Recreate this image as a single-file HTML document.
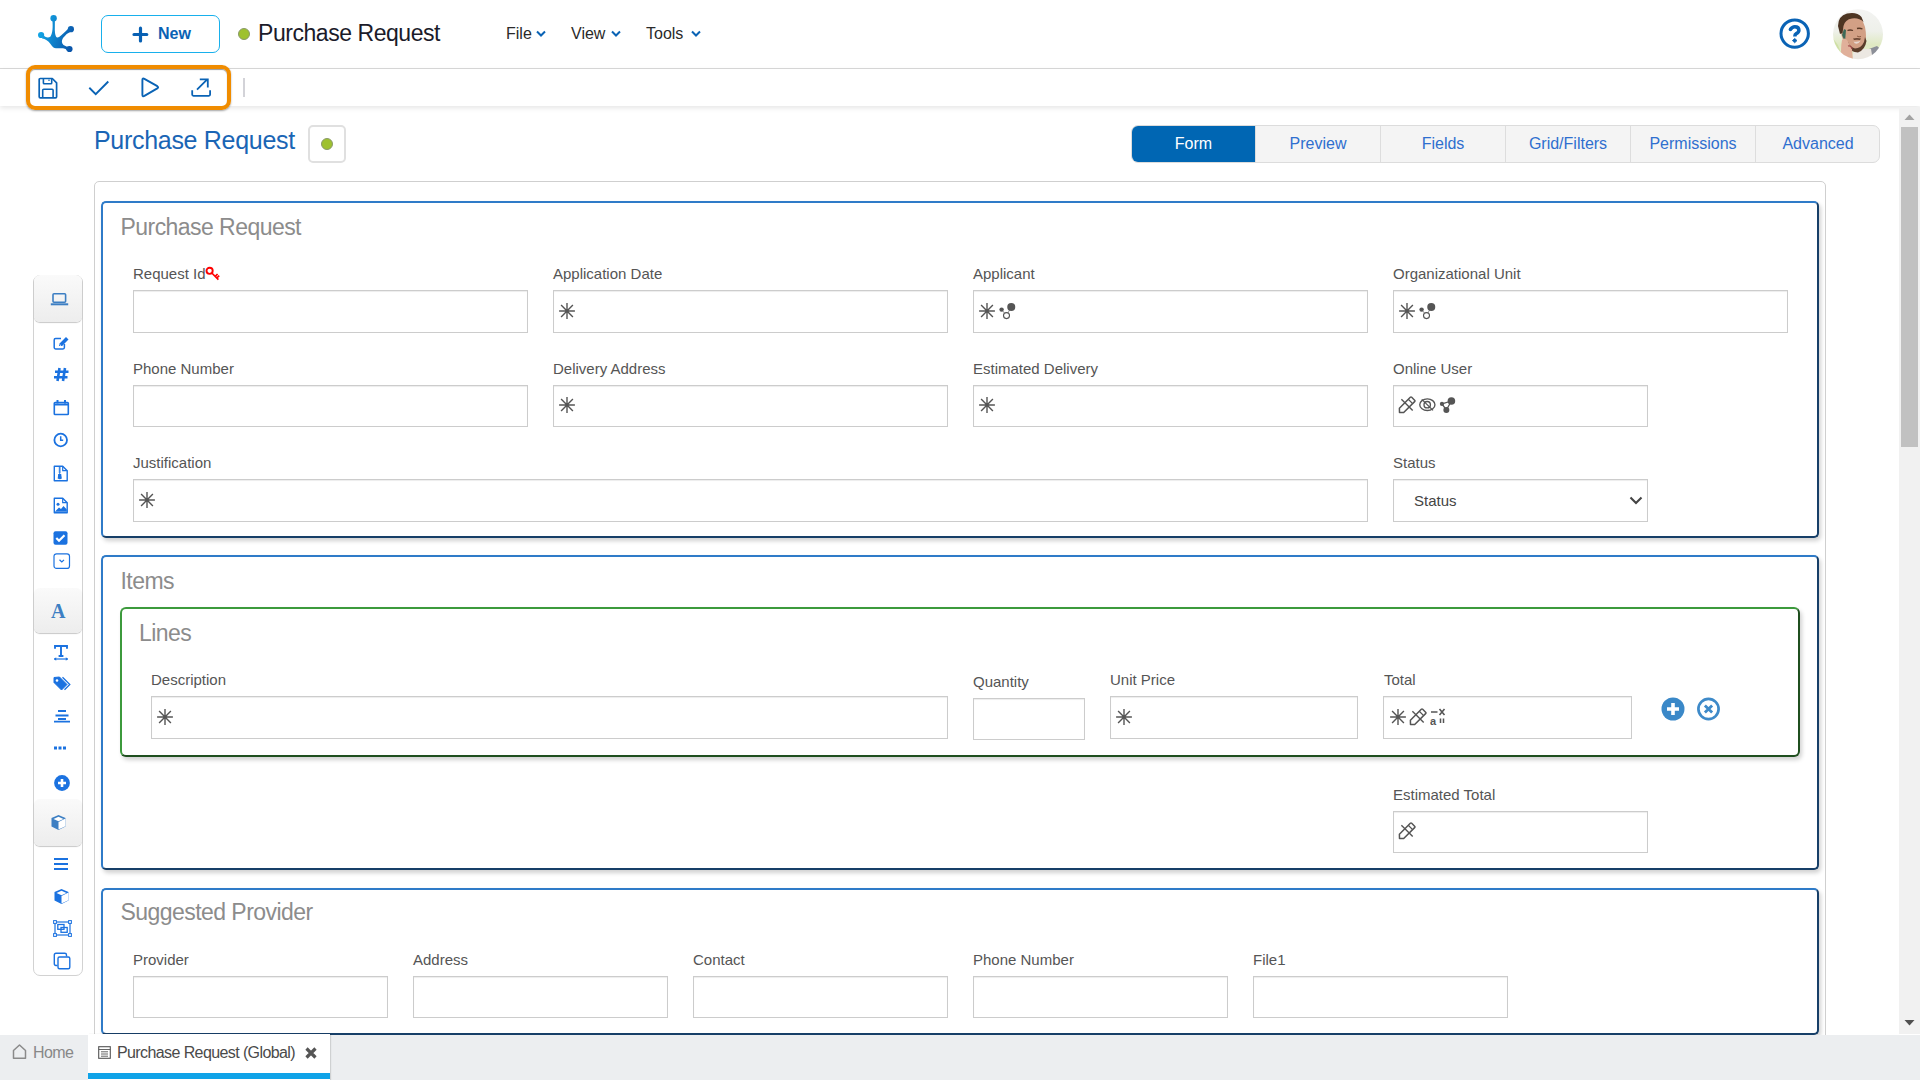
<!DOCTYPE html>
<html><head><meta charset="utf-8">
<style>
*{box-sizing:border-box;margin:0;padding:0}
html,body{width:1920px;height:1080px;overflow:hidden;background:#fff;font-family:"Liberation Sans",sans-serif;color:#333}
.a{position:absolute}
#hdr{left:0;top:0;width:1920px;height:69px;border-bottom:1px solid #d9d9d9;background:#fff}
#tb{left:0;top:69px;width:1920px;height:37px;background:#fff;box-shadow:0 2px 5px rgba(0,0,0,.1)}
.lbl{position:absolute;font-size:15px;color:#555;line-height:17px;white-space:nowrap}
.inp{position:absolute;height:43px;border:1px solid #ccc;background:#fff;box-shadow:inset 0 1px 1px rgba(0,0,0,.075)}
.panel{position:absolute;border:2px solid #2f7bc8;border-right-color:#173f68;border-bottom-color:#173f68;border-radius:5px;box-shadow:2px 3px 4px rgba(0,0,0,.18);background:#fff}
.ptitle{position:absolute;font-size:23px;color:#8c8c8c;white-space:nowrap;line-height:26px;letter-spacing:-0.55px}
.tab{position:absolute;top:0;height:36px;line-height:36px;text-align:center;font-size:16px;color:#2f6fcf;border-right:1px solid #ddd}
.ico{position:absolute}
.gpanel{position:absolute;border:2px solid #3c9a3c;border-right-color:#1f4f1f;border-bottom-color:#1f4f1f;border-radius:6px;box-shadow:2px 3px 4px rgba(0,0,0,.18);background:#fff}
</style></head><body>
<!-- header -->
<div id="hdr" class="a"></div>
<!-- logo -->
<svg class="a" style="left:30px;top:8px" width="60" height="52" viewBox="0 0 60 52">
<defs><linearGradient id="lg" gradientUnits="userSpaceOnUse" x1="9" y1="24" x2="43" y2="34"><stop offset="0" stop-color="#12a6e6"/><stop offset="1" stop-color="#0a55aa"/></linearGradient></defs>
<g fill="url(#lg)">
<circle cx="23.6" cy="10.2" r="3.2"/>
<circle cx="11.1" cy="27" r="3.1"/>
<circle cx="40.9" cy="21.2" r="3.1"/>
<circle cx="39.5" cy="41" r="3.1"/>
<path d="M22.3 12 C23 18 22.8 25 20.5 28.5 Q17.5 31 13.5 27.5 L12 30.5 Q17 31 20.5 36 Q23 40.2 26 40.2 L33 40.2 Q36 40.5 37.5 43 L41 39 Q37 39.5 33.5 37 Q30.5 34 33 30 Q36 25.5 41 23.5 L39.5 19.5 Q35 24 31 27.5 Q28.5 30 27 29.5 Q25 28.5 24.8 22 L24.9 12 Z"/>
</g></svg>
<!-- New button -->
<div class="a" style="left:101px;top:15px;width:119px;height:38px;border:1px solid #18b0ec;border-radius:7px"></div>
<svg class="a" style="left:131px;top:25px" width="19" height="19" viewBox="0 0 19 19"><path d="M9.5 3.2V16M3 9.5H15.8" stroke="#0860b3" stroke-width="3.2" stroke-linecap="round"/></svg>
<div class="a" style="left:158px;top:23px;font-size:16px;font-weight:bold;color:#0a62b4;line-height:22px">New</div>
<!-- dot + title -->
<div class="a" style="left:238px;top:28px;width:12px;height:12px;border-radius:50%;background:#9ec12f;border:1px solid #8a9a6a"></div>
<div class="a" style="left:258px;top:19px;font-size:23px;color:#1b1b2a;line-height:28px;letter-spacing:-0.45px">Purchase Request</div>
<!-- menus -->
<div class="a" style="left:506px;top:25px;font-size:16px;color:#2a2a2a;line-height:18px">File</div>
<div class="a" style="left:571px;top:25px;font-size:16px;color:#2a2a2a;line-height:18px">View</div>
<div class="a" style="left:646px;top:25px;font-size:16px;color:#2a2a2a;line-height:18px">Tools</div>
<svg class="a" style="left:535px;top:29px" width="12" height="10" viewBox="0 0 12 10"><path d="M2 2.5L6 6.5L10 2.5" fill="none" stroke="#0a63b5" stroke-width="2"/></svg>
<svg class="a" style="left:610px;top:29px" width="12" height="10" viewBox="0 0 12 10"><path d="M2 2.5L6 6.5L10 2.5" fill="none" stroke="#0a63b5" stroke-width="2"/></svg>
<svg class="a" style="left:690px;top:29px" width="12" height="10" viewBox="0 0 12 10"><path d="M2 2.5L6 6.5L10 2.5" fill="none" stroke="#0a63b5" stroke-width="2"/></svg>
<!-- help -->
<svg class="a" style="left:1777px;top:16px" width="36" height="36" viewBox="0 0 36 36"><circle cx="17.7" cy="17.6" r="13.7" fill="none" stroke="#0a63b5" stroke-width="3"/><path d="M13.3 13.5Q15.2 10.7 17.8 10.7Q21.9 10.7 21.9 14.3Q21.9 16.4 19.3 17.6Q17.8 18.4 17.8 20.6" fill="none" stroke="#0a63b5" stroke-width="3.5" stroke-linecap="butt"/><circle cx="13.4" cy="13.4" r="1.75" fill="#0a63b5"/><path d="M17.7 22.4L20 24.6L17.7 26.8L15.4 24.6Z" fill="#0a63b5" stroke="#0a63b5" stroke-width="0.8" stroke-linejoin="round"/></svg>
<!-- avatar -->
<svg class="a" style="left:1833px;top:9px" width="50" height="51" viewBox="0 0 50 51">
<defs><clipPath id="av"><circle cx="25" cy="25.2" r="25"/></clipPath>
<linearGradient id="avbg" x1="0" y1="0" x2="0" y2="1"><stop offset="0" stop-color="#f4f4f3"/><stop offset="0.45" stop-color="#eef0ea"/><stop offset="0.7" stop-color="#dfe9c2"/><stop offset="1" stop-color="#e9efd6"/></linearGradient>
<filter id="avb" x="-10%" y="-10%" width="120%" height="120%"><feGaussianBlur stdDeviation="0.5"/></filter></defs>
<g clip-path="url(#av)"><g filter="url(#avb)">
<rect x="-2" y="-2" width="54" height="54" fill="url(#avbg)"/>
<path d="M0 30 Q5 34 8 44 L0 50Z" fill="#cfe0a6"/>
<path d="M36 40 L44 37 L52 44 L52 52 L38 52Z" fill="#8c8f98"/>
<path d="M19 52 L21 41 L30 40 L38 40 L40 52Z" fill="#ece8e2"/>
<path d="M8 12 Q8 6 16 5 Q26 4 29 10 L32 18 Q34 28 32 34 Q30 41 24 42.5 Q18 43 14 37 Q9 31 8 24Z" fill="#d2a085"/>
<path d="M5 17 Q5 7 14 4.5 Q24 2.5 28.5 8 L30.5 13 Q26 8.5 19 9.5 Q12 10.5 10.5 17 L9.5 24 L7 25Z" fill="#4e3424"/>
<path d="M14.5 21.5 Q17 20.5 20 21.5 M24 19.5 Q27 18.8 29.5 20" stroke="#5a3a28" stroke-width="1.3" fill="none"/>
<path d="M15 33 Q17 38 22 39.5 Q28 39.5 31 33 L32 28 L33.5 32 Q32 41 25 43.5 Q18 43.5 14.5 37Z" fill="#5a3c2c"/><path d="M20 29.5 Q24 28.5 28 29.5 L27 31 Q24 30.3 21 31Z" fill="#6a4632"/>
<path d="M20.5 32.5 Q24 33.3 27.5 31.8 Q26 34.5 23.5 34.7 Q21.5 34.7 20.5 32.5Z" fill="#e8d8d0"/>
<path d="M24 27 Q26 28.5 28 27.5" stroke="#8a5a40" stroke-width="1" fill="none"/>
<path d="M9 26 L11 20 L13 21 L12 33Z" fill="#3d6a58"/>
<path d="M9 31 Q11 28 14 31 L19 40 L20 52 L9 52 Q7 42 9 31Z" fill="#e0b09a"/>
<path d="M15 37 Q18 36 19 40" stroke="#a04848" stroke-width="1.2" fill="none"/>
</g></g></svg>

<div id="tb" class="a"></div>
<div class="a" style="left:243px;top:78px;width:2px;height:19px;background:#d3d3d8"></div>
<svg class="a" style="left:36px;top:76px" width="24" height="24" viewBox="0 0 24 24"><path d="M3.2 3.6Q3.2 2.5 4.3 2.5H16.3L20.6 6.8V20.7Q20.6 21.8 19.5 21.8H4.3Q3.2 21.8 3.2 20.7Z" fill="none" stroke="#0a63b5" stroke-width="1.7" stroke-linejoin="round"/><path d="M7.4 3V7Q7.4 7.8 8.2 7.8H14.9Q15.7 7.8 15.7 7V3" fill="none" stroke="#0a63b5" stroke-width="1.6"/><path d="M6.7 21.5V14.2Q6.7 13.2 7.7 13.2H16.1Q17.1 13.2 17.1 14.2V21.5" fill="none" stroke="#0a63b5" stroke-width="1.6"/><path d="M13 3.5V5" stroke="#0a63b5" stroke-width="1.2"/></svg>
<svg class="a" style="left:86px;top:77px" width="24" height="24" viewBox="0 0 24 24"><path d="M3.3 10.8L9.7 17.1L22.3 4.5" fill="none" stroke="#0a63b5" stroke-width="1.9"/></svg>
<svg class="a" style="left:138px;top:76px" width="24" height="24" viewBox="0 0 24 24"><path d="M4.4 4Q4.4 1.8 6.4 2.9L19.3 10.2Q21 11.3 19.3 12.4L6.4 19.9Q4.4 21 4.4 18.8Z" fill="none" stroke="#0a63b5" stroke-width="1.9" stroke-linejoin="round"/></svg>
<svg class="a" style="left:189px;top:75px" width="24" height="24" viewBox="0 0 24 24"><path d="M3.2 15.2V19.6Q3.2 20.8 4.4 20.8H19.9Q21.1 20.8 21.1 19.6V15.2" fill="none" stroke="#0a63b5" stroke-width="1.8"/><path d="M8 14.6L18 4.6M10.8 4.4H18.8V12.4" fill="none" stroke="#0a63b5" stroke-width="1.8"/></svg>
<div class="a" style="left:26px;top:65px;width:205px;height:45px;border:4px solid #f08c00;border-radius:9px;box-shadow:0 1px 2px rgba(0,0,0,.35),inset 0 1px 1px rgba(0,0,0,.4)"></div>


<!-- page title -->
<div class="a" style="left:94px;top:125px;font-size:25px;color:#1a65b5;line-height:30px;letter-spacing:-0.3px">Purchase Request</div>


<!-- status box -->
<div class="a" style="left:308px;top:125px;width:38px;height:38px;border:2px solid #e0e0e0;border-radius:5px;background:#fff"></div>
<div class="a" style="left:321px;top:138px;width:12px;height:12px;border-radius:50%;background:#9ec12f;border:1px solid #8a9a6a"></div>
<!-- tabs -->
<div class="a" style="left:1131px;top:125px;width:749px;height:38px;border:1px solid #dcdcdc;border-radius:7px;background:#f4f4f4;overflow:hidden">
 <div class="tab" style="left:0;width:123px;background:#0066b3;color:#fff;border-right:none">Form</div>
 <div class="tab" style="left:123px;width:126px;border-left:1px solid #ddd">Preview</div>
 <div class="tab" style="left:249px;width:125px">Fields</div>
 <div class="tab" style="left:374px;width:125px">Grid/Filters</div>
 <div class="tab" style="left:499px;width:125px">Permissions</div>
 <div class="tab" style="left:624px;width:124px;border-right:none">Advanced</div>
</div>
<!-- scrollbar -->
<div class="a" style="left:1899px;top:107px;width:21px;height:927px;background:#f1f1f1"></div>
<div class="a" style="left:1901px;top:127px;width:17px;height:320px;background:#c1c1c1"></div>
<svg class="a" style="left:1903px;top:112px" width="13" height="9" viewBox="0 0 13 9"><path d="M1.5 8L6.5 2.5L11.5 8Z" fill="#a3a3a3"/></svg>
<svg class="a" style="left:1903px;top:1019px" width="13" height="9" viewBox="0 0 13 9"><path d="M1.5 1L6.5 6.5L11.5 1Z" fill="#505050"/></svg>
<!-- sidebar -->
<div class="a" style="left:33px;top:275px;width:50px;height:701px;border:1px solid #d2d2d2;border-radius:7px;background:#fff"></div>
<div class="a" style="left:34px;top:275px;width:48px;height:47px;border-radius:6px;background:linear-gradient(#fafafa,#ededed);box-shadow:0 1px 1px rgba(0,0,0,.22)"></div>
<div class="a" style="left:34px;top:588px;width:48px;height:45px;border-radius:6px;background:linear-gradient(#fafafa,#ededed);box-shadow:0 1px 1px rgba(0,0,0,.22)"></div>
<div class="a" style="left:34px;top:799px;width:48px;height:47px;border-radius:6px;background:linear-gradient(#fafafa,#ededed);box-shadow:0 1px 1px rgba(0,0,0,.22)"></div>
<svg class="ico" style="left:50px;top:292px" width="19" height="14" viewBox="0 0 19 14"><rect x="3" y="1.8" width="12.6" height="8.5" rx="1" fill="none" stroke="#3d7fc3" stroke-width="1.6"/><path d="M0.8 12.3H18.2" stroke="#3d7fc3" stroke-width="2"/></svg>
<svg class="ico" style="left:53px;top:336px" width="17" height="14" viewBox="0 0 17 14"><path d="M8 2.5H2.6Q1.2 2.5 1.2 3.9V11.5Q1.2 12.9 2.6 12.9H10Q11.4 12.9 11.4 11.5V8" fill="none" stroke="#1b72e0" stroke-width="1.5"/><path d="M6 10L6.6 7.4L13 1L15.5 3.5L9.1 9.9Z" fill="#1b72e0"/><path d="M6.9 8.7L8.2 9.9" stroke="#fff" stroke-width="0.9"/></svg>
<svg class="ico" style="left:53px;top:367px" width="17" height="15" viewBox="0 0 17 15"><path d="M6.5 1L4.5 14M12 1L10 14M2 4.8H15.5M1 10.3H14.5" stroke="#1b72e0" stroke-width="2.6"/></svg>
<svg class="ico" style="left:53px;top:399px" width="17" height="17" viewBox="0 0 17 17"><rect x="1.3" y="3.5" width="14" height="12" rx="0.8" fill="none" stroke="#1b72e0" stroke-width="1.6"/><path d="M1.3 4.5H15.3V6.5H1.3Z" fill="#1b72e0"/><path d="M4.5 1V4.5M12 1V4.5" stroke="#1b72e0" stroke-width="2"/></svg>
<svg class="ico" style="left:53px;top:432px" width="16" height="16" viewBox="0 0 16 16"><circle cx="7.7" cy="8" r="6.3" fill="none" stroke="#1b72e0" stroke-width="1.8"/><path d="M7.7 4.2V8.3H10.2" fill="none" stroke="#1b72e0" stroke-width="1.5"/></svg>
<svg class="ico" style="left:53px;top:465px" width="16" height="17" viewBox="0 0 16 17"><path d="M1.3 1.2H9.7L14.2 5.7V15.8H1.3Z" fill="none" stroke="#1b72e0" stroke-width="1.4" stroke-linejoin="round"/><path d="M9.7 1.2V5.7H14.2" fill="none" stroke="#1b72e0" stroke-width="1.2"/><path d="M6.7 2V9M5.6 3H7.8M5.6 5H7.8M5.6 7H7.8" stroke="#1b72e0" stroke-width="0.9"/><path d="M5.2 9H8.2L8.8 13.5Q7 14.8 4.7 13.5Z" fill="#1b72e0"/></svg>
<svg class="ico" style="left:53px;top:497px" width="16" height="17" viewBox="0 0 16 17"><path d="M1.3 1.2H9.7L14.2 5.7V15.8H1.3Z" fill="none" stroke="#1b72e0" stroke-width="1.4" stroke-linejoin="round"/><path d="M9.7 1.2V5.7H14.2" fill="none" stroke="#1b72e0" stroke-width="1.2"/><circle cx="5" cy="7.2" r="1.5" fill="#1b72e0"/><path d="M2 14.5L6 10.5L8 12L10.5 9L13.8 12.5V14.8H2Z" fill="#1b72e0"/></svg>
<svg class="ico" style="left:53px;top:531px" width="15" height="15" viewBox="0 0 15 15"><rect x="0.5" y="0.2" width="14" height="13.6" rx="2" fill="#1b72e0"/><path d="M3.3 7L6 9.7L11.5 4.3" fill="none" stroke="#fff" stroke-width="2.2"/></svg>
<svg class="ico" style="left:53px;top:553px" width="18" height="17" viewBox="0 0 18 17"><rect x="1" y="0.8" width="15.5" height="14.6" rx="2.5" fill="none" stroke="#1b72e0" stroke-width="1.2"/><path d="M6.5 6.8L8.8 9L11 6.8" fill="none" stroke="#1b72e0" stroke-width="1.2"/></svg>
<div class="a" style="left:51px;top:600px;font-family:'Liberation Serif',serif;font-weight:bold;font-size:20px;line-height:22px;color:#3d7fc3">A</div>
<svg class="ico" style="left:53px;top:644px" width="16" height="17" viewBox="0 0 16 17"><path d="M2 4.8V2H14V4.8M8 2V12.3M5.6 12H10.4" fill="none" stroke="#1b72e0" stroke-width="1.9"/><path d="M1 15H15" stroke="#1b72e0" stroke-width="1.2"/><path d="M1 15L3.2 13.2V16.8ZM15 15L12.8 13.2V16.8Z" fill="#1b72e0"/></svg>
<svg class="ico" style="left:53px;top:676px" width="18" height="16" viewBox="0 0 18 16"><path d="M1 1.5V6.5L8.5 14L14 8.5L6.5 1Z" fill="#1b72e0" stroke="#1b72e0" stroke-width="1" stroke-linejoin="round"/><circle cx="4" cy="4.5" r="1.3" fill="#fff"/><path d="M9.5 1.2L16.8 8.5L11.5 13.8" fill="none" stroke="#1b72e0" stroke-width="1.3"/></svg>
<svg class="ico" style="left:53px;top:709px" width="18" height="14" viewBox="0 0 18 14"><path d="M5 2H13M2.5 6.5H15.5M5 10H13M1 12.6H17" stroke="#1b72e0" stroke-width="1.9"/></svg>
<svg class="ico" style="left:53px;top:745px" width="14" height="6" viewBox="0 0 14 6"><rect x="1" y="1.5" width="3" height="3" fill="#1b72e0"/><rect x="5.5" y="1.5" width="3" height="3" fill="#1b72e0"/><rect x="10" y="1.5" width="3" height="3" fill="#1b72e0"/></svg>
<svg class="ico" style="left:53px;top:774px" width="18" height="18" viewBox="0 0 18 18"><circle cx="9" cy="9" r="7.9" fill="#1b72e0"/><path d="M9 5V13M5 9H13" stroke="#fff" stroke-width="2.6"/></svg>
<svg class="ico" style="left:50px;top:814px" width="17" height="17" viewBox="0 0 17 17"><path d="M8.5 1L15.5 4V12.5L8.5 16L1.5 12.5V4Z" fill="#3d7fc3"/><path d="M8.5 8L15.5 4.5V12.2L8.5 15.5Z" fill="#fff"/><path d="M3.5 5L8.5 2.8L13.5 5L8.5 7.2Z" fill="#fff"/></svg>
<svg class="ico" style="left:53px;top:857px" width="16" height="14" viewBox="0 0 16 14"><path d="M1 2H15M1 7H15M1 12H15" stroke="#1b72e0" stroke-width="2.1"/></svg>
<svg class="ico" style="left:53px;top:888px" width="17" height="17" viewBox="0 0 17 17"><path d="M8.5 1L15.5 4V12.5L8.5 16L1.5 12.5V4Z" fill="#1b72e0"/><path d="M8.5 8L15.5 4.5V12.2L8.5 15.5Z" fill="#fff"/><path d="M3.5 5L8.5 2.8L13.5 5L8.5 7.2Z" fill="#fff"/></svg>
<svg class="ico" style="left:53px;top:920px" width="19" height="17" viewBox="0 0 19 17"><rect x="2" y="2" width="15" height="13" fill="none" stroke="#1b72e0" stroke-width="1.2"/><rect x="0.6" y="0.6" width="2.8" height="2.8" fill="#fff" stroke="#1b72e0" stroke-width="1"/><rect x="15.6" y="0.6" width="2.8" height="2.8" fill="#fff" stroke="#1b72e0" stroke-width="1"/><rect x="0.6" y="13.6" width="2.8" height="2.8" fill="#fff" stroke="#1b72e0" stroke-width="1"/><rect x="15.6" y="13.6" width="2.8" height="2.8" fill="#fff" stroke="#1b72e0" stroke-width="1"/><rect x="4.8" y="4.5" width="6.2" height="4.8" fill="none" stroke="#1b72e0" stroke-width="1.3"/><rect x="8" y="7.5" width="6.2" height="4.8" fill="none" stroke="#1b72e0" stroke-width="1.3"/></svg>
<svg class="ico" style="left:53px;top:952px" width="18" height="18" viewBox="0 0 18 18"><path d="M4.5 13.5H3Q1.3 13.5 1.3 11.8V3Q1.3 1.3 3 1.3H11.8Q13.5 1.3 13.5 3V4.5" fill="none" stroke="#1b72e0" stroke-width="1.4"/><rect x="5" y="5" width="11.8" height="11.8" rx="1.5" fill="none" stroke="#1b72e0" stroke-width="1.4"/></svg>
<!-- outer container -->
<div class="a" style="left:94px;top:181px;width:1732px;height:900px;border:1px solid #cfcfcf;border-radius:5px"></div>

<!-- panel 1 -->
<div class="panel" style="left:101px;top:201px;width:1718px;height:337px"></div>
<div class="ptitle" style="left:120.5px;top:214px">Purchase Request</div>

<!-- panel 2 -->
<div class="panel" style="left:101px;top:555px;width:1718px;height:315px"></div>
<div class="ptitle" style="left:120.5px;top:568px">Items</div>

<!-- panel 3 -->
<div class="panel" style="left:101px;top:888px;width:1718px;height:147px"></div>
<div class="ptitle" style="left:120.5px;top:899px">Suggested Provider</div>

<!-- fields -->
<div class="lbl" style="left:133px;top:265.3px">Request Id<svg style="position:absolute;left:72px;top:0px" width="16" height="16" viewBox="0 0 16 16"><circle cx="4.6" cy="5.8" r="3.1" fill="none" stroke="#f00" stroke-width="1.9"/><path d="M6.8 8L13.4 14.6M10.2 11.4L12.6 9M11.8 13L14.2 10.6" stroke="#f00" stroke-width="1.7"/></svg></div>
<div class="inp" style="left:133px;top:290px;width:395px;height:43px"></div>
<div class="lbl" style="left:553px;top:265.3px">Application Date</div>
<div class="inp" style="left:553px;top:290px;width:395px;height:43px"></div><svg class="ico" style="left:559px;top:303px" width="16" height="16" viewBox="0 0 16 16"><path d="M8 0.1V15.9M0.1 8H15.9M2.1 2.1L13.9 13.9M13.9 2.1L2.1 13.9" stroke="#555" stroke-width="1.4"/></svg>
<div class="lbl" style="left:973px;top:265.3px">Applicant</div>
<div class="inp" style="left:973px;top:290px;width:395px;height:43px"></div><svg class="ico" style="left:979px;top:303px" width="16" height="16" viewBox="0 0 16 16"><path d="M8 0.1V15.9M0.1 8H15.9M2.1 2.1L13.9 13.9M13.9 2.1L2.1 13.9" stroke="#555" stroke-width="1.4"/></svg><svg class="ico" style="left:997px;top:300px" width="20" height="20" viewBox="0 0 20 20"><path d="M4.6 9.6L9.5 15.6L14.2 7" stroke="#777" stroke-width="0.8" fill="none"/><circle cx="4.6" cy="9.6" r="2.2" fill="#555"/><circle cx="14.25" cy="6.9" r="4" fill="#555"/><circle cx="9.5" cy="15.6" r="3" fill="#fff" stroke="#555" stroke-width="1.1"/></svg>
<div class="lbl" style="left:1393px;top:265.3px">Organizational Unit</div>
<div class="inp" style="left:1393px;top:290px;width:395px;height:43px"></div><svg class="ico" style="left:1399px;top:303px" width="16" height="16" viewBox="0 0 16 16"><path d="M8 0.1V15.9M0.1 8H15.9M2.1 2.1L13.9 13.9M13.9 2.1L2.1 13.9" stroke="#555" stroke-width="1.4"/></svg><svg class="ico" style="left:1417px;top:300px" width="20" height="20" viewBox="0 0 20 20"><path d="M4.6 9.6L9.5 15.6L14.2 7" stroke="#777" stroke-width="0.8" fill="none"/><circle cx="4.6" cy="9.6" r="2.2" fill="#555"/><circle cx="14.25" cy="6.9" r="4" fill="#555"/><circle cx="9.5" cy="15.6" r="3" fill="#fff" stroke="#555" stroke-width="1.1"/></svg>
<div class="lbl" style="left:133px;top:360.3px">Phone Number</div>
<div class="inp" style="left:133px;top:385px;width:395px;height:42px"></div>
<div class="lbl" style="left:553px;top:360.3px">Delivery Address</div>
<div class="inp" style="left:553px;top:385px;width:395px;height:42px"></div><svg class="ico" style="left:559px;top:397px" width="16" height="16" viewBox="0 0 16 16"><path d="M8 0.1V15.9M0.1 8H15.9M2.1 2.1L13.9 13.9M13.9 2.1L2.1 13.9" stroke="#555" stroke-width="1.4"/></svg>
<div class="lbl" style="left:973px;top:360.3px">Estimated Delivery</div>
<div class="inp" style="left:973px;top:385px;width:395px;height:42px"></div><svg class="ico" style="left:979px;top:397px" width="16" height="16" viewBox="0 0 16 16"><path d="M8 0.1V15.9M0.1 8H15.9M2.1 2.1L13.9 13.9M13.9 2.1L2.1 13.9" stroke="#555" stroke-width="1.4"/></svg>
<div class="lbl" style="left:1393px;top:360.3px">Online User</div>
<div class="inp" style="left:1393px;top:385px;width:255px;height:42px"></div><svg class="ico" style="left:1398px;top:396px" width="18" height="18" viewBox="0 0 18 18"><path d="M1.5 16.5L1.4 12.2L12.3 1.3Q13 0.6 13.7 1.3L16.6 4.2Q17.3 4.9 16.6 5.6L5.7 16.5Z" fill="none" stroke="#555" stroke-width="1.5" stroke-linejoin="round"/><path d="M10.3 3.3L14.6 7.6" stroke="#555" stroke-width="1.3"/><path d="M3.4 3.3L14.7 14.6" stroke="#555" stroke-width="1.4"/></svg><svg class="ico" style="left:1419px;top:398px" width="17" height="15" viewBox="0 0 17 15"><ellipse cx="8.35" cy="6.7" rx="7.6" ry="5.8" fill="none" stroke="#555" stroke-width="1.35"/><circle cx="8.2" cy="6.7" r="3.2" fill="none" stroke="#555" stroke-width="1.35"/><path d="M2.8 1.4L14 12.4" stroke="#555" stroke-width="1.3"/></svg><svg class="ico" style="left:1437px;top:394px" width="20" height="20" viewBox="0 0 20 20"><path d="M4.95 9.9L14.4 7L9.35 16Z" fill="#fff" stroke="#555" stroke-width="1.3" stroke-linejoin="round"/><circle cx="4.95" cy="9.9" r="2.1" fill="#555"/><circle cx="14.4" cy="7" r="3.8" fill="#555"/><circle cx="9.35" cy="16" r="3" fill="#555"/></svg>
<div class="lbl" style="left:133px;top:454.3px">Justification</div>
<div class="inp" style="left:133px;top:479px;width:1235px;height:43px"></div><svg class="ico" style="left:139px;top:492px" width="16" height="16" viewBox="0 0 16 16"><path d="M8 0.1V15.9M0.1 8H15.9M2.1 2.1L13.9 13.9M13.9 2.1L2.1 13.9" stroke="#555" stroke-width="1.4"/></svg>
<div class="lbl" style="left:1393px;top:454.3px">Status</div>
<div class="inp" style="left:1393px;top:479px;width:255px;height:43px"></div><div class="a" style="left:1414px;top:492px;font-size:15px;color:#444;line-height:17px">Status</div><svg class="ico" style="left:1629px;top:495px" width="14" height="11" viewBox="0 0 14 11"><path d="M1.5 2.5L7 8L12.5 2.5" fill="none" stroke="#444" stroke-width="2.1"/></svg>
<div class="gpanel" style="left:120px;top:607px;width:1680px;height:150px"></div>
<div class="ptitle" style="left:139px;top:620px">Lines</div>
<div class="lbl" style="left:151px;top:671.3px">Description</div>
<div class="inp" style="left:151px;top:696px;width:797px;height:43px"></div><svg class="ico" style="left:157px;top:709px" width="16" height="16" viewBox="0 0 16 16"><path d="M8 0.1V15.9M0.1 8H15.9M2.1 2.1L13.9 13.9M13.9 2.1L2.1 13.9" stroke="#555" stroke-width="1.4"/></svg>
<div class="lbl" style="left:973px;top:673.3px">Quantity</div>
<div class="inp" style="left:973px;top:698px;width:112px;height:42px"></div>
<div class="lbl" style="left:1110px;top:671.3px">Unit Price</div>
<div class="inp" style="left:1110px;top:696px;width:248px;height:43px"></div><svg class="ico" style="left:1116px;top:709px" width="16" height="16" viewBox="0 0 16 16"><path d="M8 0.1V15.9M0.1 8H15.9M2.1 2.1L13.9 13.9M13.9 2.1L2.1 13.9" stroke="#555" stroke-width="1.4"/></svg>
<div class="lbl" style="left:1384px;top:671.3px">Total</div>
<div class="inp" style="left:1383px;top:696px;width:249px;height:43px"></div><svg class="ico" style="left:1390px;top:709px" width="16" height="16" viewBox="0 0 16 16"><path d="M8 0.1V15.9M0.1 8H15.9M2.1 2.1L13.9 13.9M13.9 2.1L2.1 13.9" stroke="#555" stroke-width="1.4"/></svg><svg class="ico" style="left:1409px;top:708px" width="18" height="18" viewBox="0 0 18 18"><path d="M1.5 16.5L1.4 12.2L12.3 1.3Q13 0.6 13.7 1.3L16.6 4.2Q17.3 4.9 16.6 5.6L5.7 16.5Z" fill="none" stroke="#555" stroke-width="1.5" stroke-linejoin="round"/><path d="M10.3 3.3L14.6 7.6" stroke="#555" stroke-width="1.3"/><path d="M3.4 3.3L14.7 14.6" stroke="#555" stroke-width="1.4"/></svg><svg class="ico" style="left:1430px;top:708px" width="17" height="17" viewBox="0 0 17 17"><path d="M1 4H7.5" stroke="#555" stroke-width="1.5"/><path d="M9.5 1L14.5 7M14.5 1L9.5 7" stroke="#555" stroke-width="1.6"/><text x="0.1" y="16.6" font-family="Liberation Sans" font-weight="bold" font-size="11" fill="#555">a</text><path d="M10.5 10.5V15M13.5 10.5V15" stroke="#555" stroke-width="1.5"/></svg>
<svg class="ico" style="left:1660px;top:696px" width="26" height="26" viewBox="0 0 26 26"><circle cx="13" cy="13" r="11.5" fill="#3a88c8"/><path d="M13 7V19M7 13H19" stroke="#fff" stroke-width="3.6"/></svg>
<svg class="ico" style="left:1695px;top:696px" width="26" height="26" viewBox="0 0 26 26"><circle cx="13.5" cy="13" r="10.1" fill="none" stroke="#3e8ac9" stroke-width="2.7"/><path d="M9.9 9.4L17.1 16.6M17.1 9.4L9.9 16.6" stroke="#3e8ac9" stroke-width="2.8"/></svg>
<div class="lbl" style="left:1393px;top:786.3px">Estimated Total</div>
<div class="inp" style="left:1393px;top:811px;width:255px;height:42px"></div><svg class="ico" style="left:1398px;top:822px" width="18" height="18" viewBox="0 0 18 18"><path d="M1.5 16.5L1.4 12.2L12.3 1.3Q13 0.6 13.7 1.3L16.6 4.2Q17.3 4.9 16.6 5.6L5.7 16.5Z" fill="none" stroke="#555" stroke-width="1.5" stroke-linejoin="round"/><path d="M10.3 3.3L14.6 7.6" stroke="#555" stroke-width="1.3"/><path d="M3.4 3.3L14.7 14.6" stroke="#555" stroke-width="1.4"/></svg>
<div class="lbl" style="left:133px;top:950.7px">Provider</div>
<div class="inp" style="left:133px;top:976px;width:255px;height:42px"></div>
<div class="lbl" style="left:413px;top:950.7px">Address</div>
<div class="inp" style="left:413px;top:976px;width:255px;height:42px"></div>
<div class="lbl" style="left:693px;top:950.7px">Contact</div>
<div class="inp" style="left:693px;top:976px;width:255px;height:42px"></div>
<div class="lbl" style="left:973px;top:950.7px">Phone Number</div>
<div class="inp" style="left:973px;top:976px;width:255px;height:42px"></div>
<div class="lbl" style="left:1253px;top:950.7px">File1</div>
<div class="inp" style="left:1253px;top:976px;width:255px;height:42px"></div>
<!-- bottom bar -->
<div class="a" style="left:0;top:1035px;width:1920px;height:45px;background:#eceef0"></div>
<svg class="ico" style="left:11px;top:1043px" width="17" height="17" viewBox="0 0 17 17"><path d="M2.5 7.5L8.5 2L14.5 7.5V15.3H2.5Z" fill="none" stroke="#8a8a8a" stroke-width="1.5" stroke-linejoin="round"/></svg>
<div class="a" style="left:33px;top:1044px;font-size:16px;color:#888;line-height:18px;letter-spacing:-0.6px">Home</div>
<div class="a" style="left:88px;top:1034px;width:242px;height:46px;background:#fff;box-shadow:1px 0 1px rgba(0,0,0,.12)"></div>
<div class="a" style="left:88px;top:1073px;width:242px;height:6px;background:#0fa3e8"></div>
<svg class="ico" style="left:98px;top:1046px" width="13" height="13" viewBox="0 0 13 13"><rect x="0.7" y="0.7" width="11.6" height="11.6" fill="none" stroke="#555" stroke-width="1.1"/><path d="M0.7 3.5H12.3M3 5.8H10M3 8H10M3 10.2H10" stroke="#555" stroke-width="0.9"/></svg>
<div class="a" style="left:117px;top:1044px;font-size:16px;color:#4a4a4a;line-height:18px;letter-spacing:-0.6px">Purchase Request (Global)</div>
<svg class="ico" style="left:304px;top:1046px" width="14" height="14" viewBox="0 0 14 14"><path d="M2.5 2.5L11.5 11.5M11.5 2.5L2.5 11.5" stroke="#555" stroke-width="3.2"/></svg>

</body></html>
